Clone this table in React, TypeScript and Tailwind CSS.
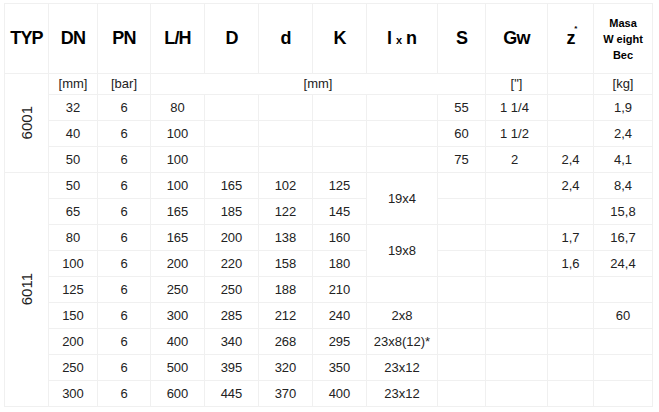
type Row = {
  dn: string;
  pn: string;
  lh: string;
  D?: string;
  d?: string;
  k?: string;
  // null = covered by the rowSpan cell above
  lxn?: string | null;
  lxnSpan?: number;
  s?: string;
  gw?: string;
  z?: string;
  masa?: string;
};

const group6001: Row[] = [
  { dn: '32', pn: '6', lh: '80', s: '55', gw: '1 1/4', masa: '1,9' },
  { dn: '40', pn: '6', lh: '100', s: '60', gw: '1 1/2', masa: '2,4' },
  { dn: '50', pn: '6', lh: '100', s: '75', gw: '2', z: '2,4', masa: '4,1' },
];

const group6011: Row[] = [
  { dn: '50', pn: '6', lh: '100', D: '165', d: '102', k: '125', lxn: '19x4', lxnSpan: 2, z: '2,4', masa: '8,4' },
  { dn: '65', pn: '6', lh: '165', D: '185', d: '122', k: '145', lxn: null, masa: '15,8' },
  { dn: '80', pn: '6', lh: '165', D: '200', d: '138', k: '160', lxn: '19x8', lxnSpan: 2, z: '1,7', masa: '16,7' },
  { dn: '100', pn: '6', lh: '200', D: '220', d: '158', k: '180', lxn: null, z: '1,6', masa: '24,4' },
  { dn: '125', pn: '6', lh: '250', D: '250', d: '188', k: '210' },
  { dn: '150', pn: '6', lh: '300', D: '285', d: '212', k: '240', lxn: '2x8', masa: '60' },
  { dn: '200', pn: '6', lh: '400', D: '340', d: '268', k: '295', lxn: '23x8(12)*' },
  { dn: '250', pn: '6', lh: '500', D: '395', d: '320', k: '350', lxn: '23x12' },
  { dn: '300', pn: '6', lh: '600', D: '445', d: '370', k: '400', lxn: '23x12' },
];

const cell = 'border border-[#f0f0f0] p-0 text-center align-middle';
const headCell = `${cell} text-[18px] font-bold tracking-[-0.8px] text-black`;

function DataCells({ row }: { row: Row }) {
  return (
    <>
      <td className={cell}>{row.dn}</td>
      <td className={cell}>{row.pn}</td>
      <td className={cell}>{row.lh}</td>
      <td className={cell}>{row.D}</td>
      <td className={cell}>{row.d}</td>
      <td className={cell}>{row.k}</td>
      {row.lxn !== null && (
        <td className={cell} rowSpan={row.lxnSpan ?? 1}>
          {row.lxn}
        </td>
      )}
      <td className={cell}>{row.s}</td>
      <td className={`${cell} whitespace-pre pr-[4px]`}>{row.gw}</td>
      <td className={cell}>{row.z}</td>
      <td className={cell}>{row.masa}</td>
    </>
  );
}

function TypCell({ label, span }: { label: string; span: number }) {
  return (
    <td className={cell} rowSpan={span}>
      <div className="flex items-center justify-center">
        <span className="[writing-mode:vertical-rl] rotate-180 text-[15px] leading-none">{label}</span>
      </div>
    </td>
  );
}

export default function App() {
  return (
    <div className="min-h-[412px] w-[659px] bg-white pl-[4px] pt-[3px] font-['Liberation_Sans',Arial,sans-serif] text-[13px] text-[#222]">
      <table className="w-[648px] table-fixed border-collapse">
        <colgroup>
          <col className="w-[44px]" />
          <col className="w-[49px]" />
          <col className="w-[53px]" />
          <col className="w-[54px]" />
          <col className="w-[54px]" />
          <col className="w-[54px]" />
          <col className="w-[54px]" />
          <col className="w-[71px]" />
          <col className="w-[48px]" />
          <col className="w-[62px]" />
          <col className="w-[46px]" />
          <col className="w-[59px]" />
        </colgroup>
        <thead>
          <tr className="h-[70px]">
            <th className={headCell}>TYP</th>
            <th className={headCell}>DN</th>
            <th className={headCell}>PN</th>
            <th className={headCell}>L/H</th>
            <th className={headCell}>D</th>
            <th className={headCell}>d</th>
            <th className={headCell}>K</th>
            <th className={headCell}>
              <span className="tracking-normal">
                l<span className="mx-[4px] text-[11px]">x</span>n
              </span>
            </th>
            <th className={headCell}>S</th>
            <th className={headCell}>Gw</th>
            <th className={headCell}>
              <span className="relative">
                z<span className="absolute -right-[2px] top-[-3px] text-[8px] leading-none">*</span>
              </span>
            </th>
            <th className={`${cell} text-[11px] font-bold leading-[16px] tracking-normal text-black`}>
              Masa
              <br />
              <span className="mr-[3px]">W</span>eight
              <br />
              Bec
            </th>
          </tr>
        </thead>
        <tbody>
          <tr className="h-[21px]">
            <TypCell label="6001" span={4} />
            <td className={cell}>[mm]</td>
            <td className={cell}>[bar]</td>
            <td className={cell} colSpan={6}>
              [mm]
            </td>
            <td className={cell}>["]</td>
            <td className={cell}></td>
            <td className={cell}>[kg]</td>
          </tr>
          {group6001.map(row => (
            <tr key={`a${row.dn}`} className="h-[26px]">
              <DataCells row={row} />
            </tr>
          ))}
          {group6011.map((row, i) => (
            <tr key={`b${row.dn}`} className="h-[26px]">
              {i === 0 && <TypCell label="6011" span={group6011.length} />}
              <DataCells row={row} />
            </tr>
          ))}
        </tbody>
      </table>
    </div>
  );
}
